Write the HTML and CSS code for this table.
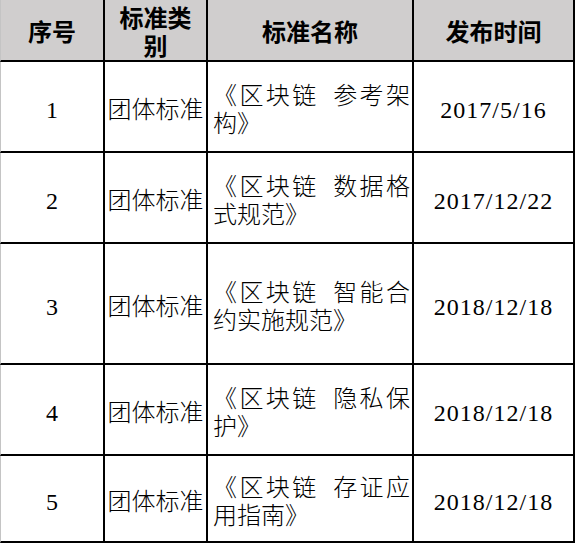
FILE: index.html
```html
<!DOCTYPE html>
<html lang="zh-CN">
<head>
<meta charset="utf-8">
<title>区块链团体标准</title>
<link rel="stylesheet" href="styles.css">
</head>
<body>
<div class="sheet" role="table">
  <div class="cell head first">序号</div>
  <div class="cell head">标准类别</div>
  <div class="cell head">标准名称</div>
  <div class="cell head">发布时间</div>

  <div class="cell num first">1</div>
  <div class="cell kind">团体标准</div>
  <div class="cell name"><div class="txt">《区块链&#8194;参考架构》</div></div>
  <div class="cell date">2017/5/16</div>

  <div class="cell num first">2</div>
  <div class="cell kind">团体标准</div>
  <div class="cell name"><div class="txt">《区块链&#8194;数据格式规范》</div></div>
  <div class="cell date">2017/12/22</div>

  <div class="cell num first">3</div>
  <div class="cell kind">团体标准</div>
  <div class="cell name"><div class="txt">《区块链&#8194;智能合约实施规范》</div></div>
  <div class="cell date">2018/12/18</div>

  <div class="cell num first">4</div>
  <div class="cell kind">团体标准</div>
  <div class="cell name"><div class="txt">《区块链&#8194;隐私保护》</div></div>
  <div class="cell date">2018/12/18</div>

  <div class="cell num first">5</div>
  <div class="cell kind">团体标准</div>
  <div class="cell name"><div class="txt">《区块链&#8194;存证应用指南》</div></div>
  <div class="cell date">2018/12/18</div>
</div>
</body>
</html>
```

FILE: styles.css
```css
html, body {
  margin: 0;
  padding: 0;
  background: #ffffff;
}

body {
  font-family: "Liberation Serif", "Noto Sans CJK SC", serif;
  font-size: 24px;
  color: #000000;
}

.sheet {
  display: grid;
  grid-template-columns: 105px 103px 206px 161px;
  grid-template-rows: 62px 91px 91px 121px 91px 87px;
  width: 575px;
}

.cell {
  box-sizing: border-box;
  display: flex;
  align-items: center;
  justify-content: center;
  text-align: center;
  border-right: 2px solid #000;
  border-bottom: 2px solid #000;
  line-height: 28px;
  padding-top: 6px;
  font-weight: 300;
}

.first {
  border-left: 1px solid #c4c4c4;
}

.head {
  background: #d0cece;
  font-weight: 700;
  padding: 5px 4px 0;
}

.date {
  letter-spacing: 1px;
}

.name {
  justify-content: flex-start;
  padding: 6px 2px 0 5px;
}

.name .txt {
  width: 100%;
  text-align: justify;
}
```
